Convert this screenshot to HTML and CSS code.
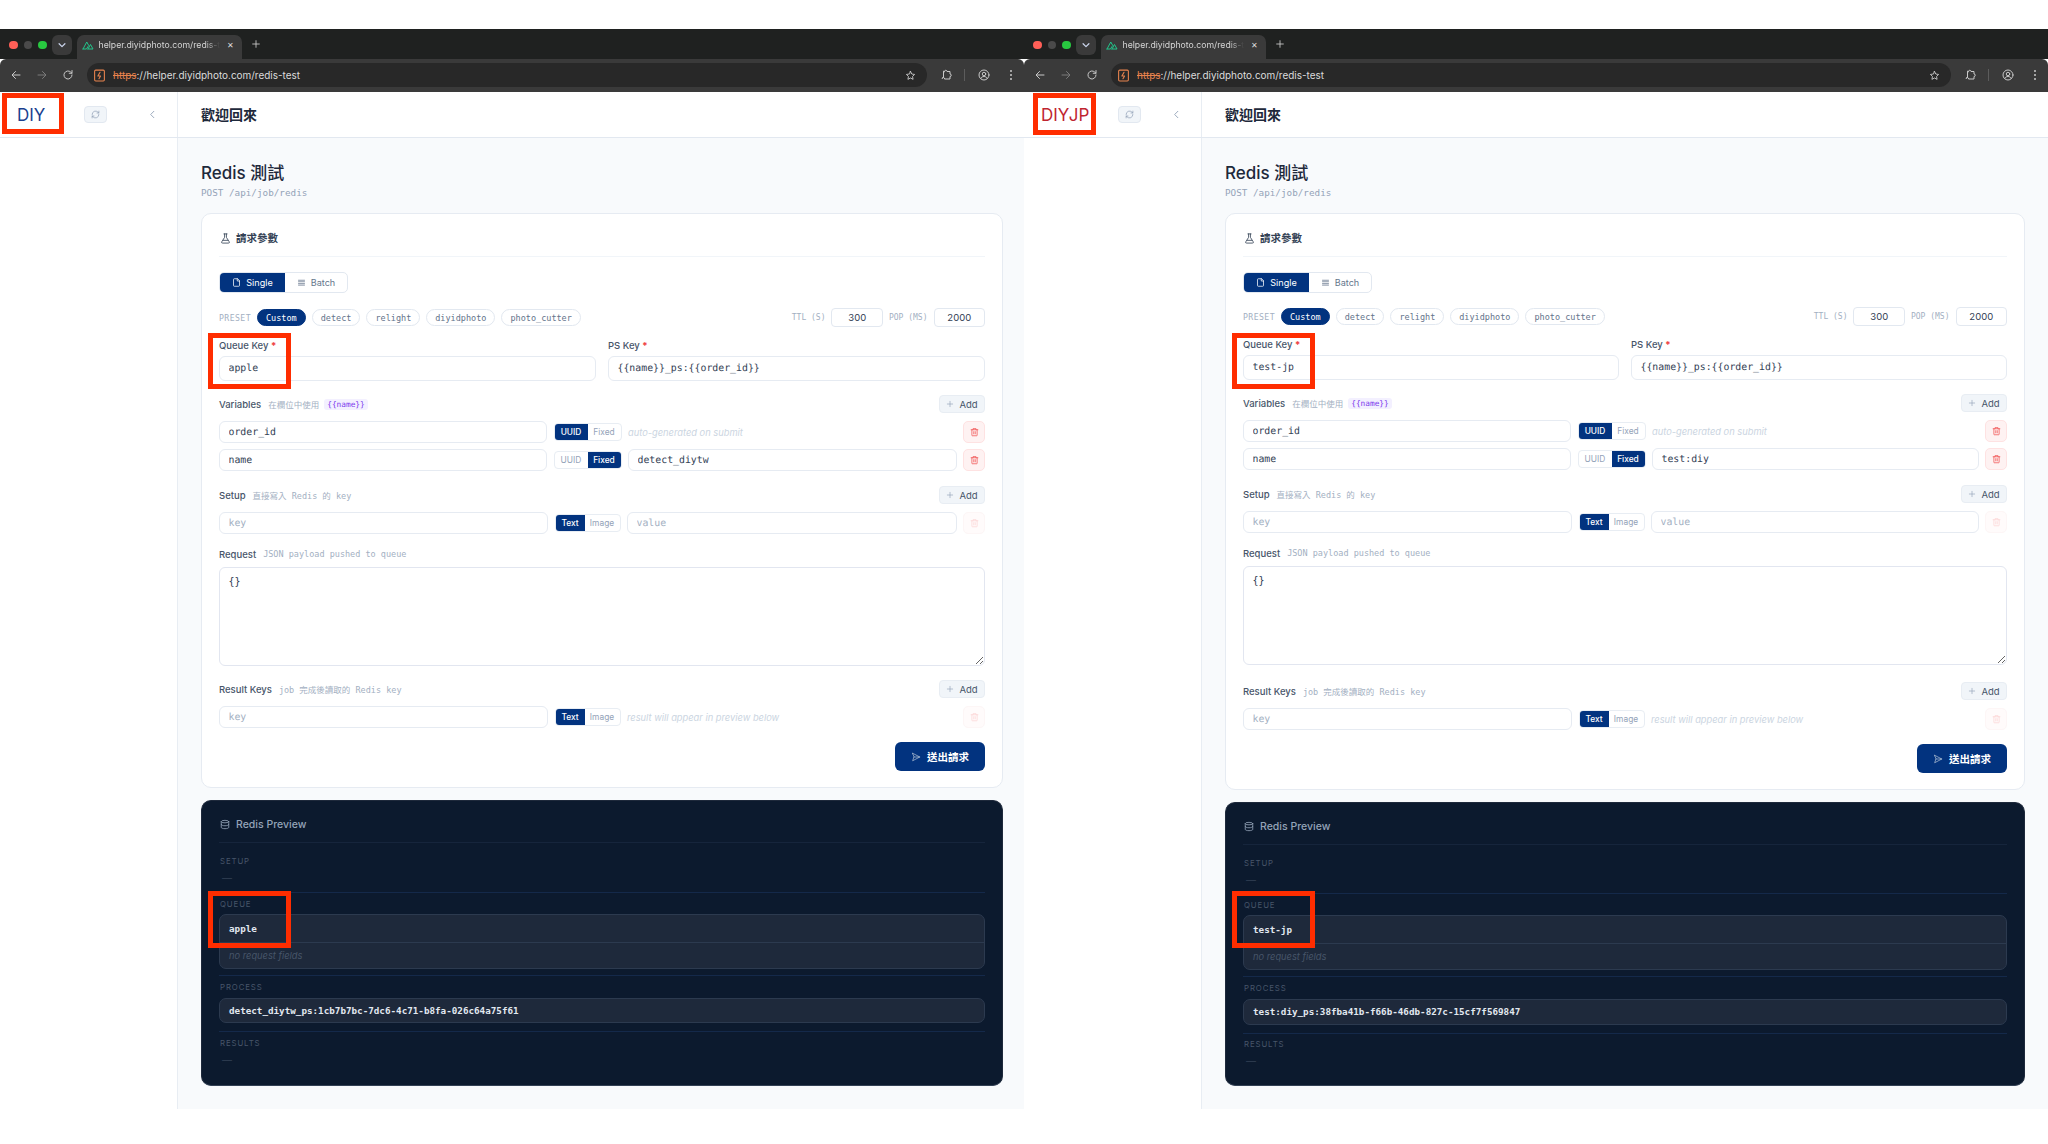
FILE: index.html
```html
<!DOCTYPE html>
<html lang="zh-Hant">
<head>
  <meta charset="UTF-8">
  <title>Redis 測試</title>
  <link rel="stylesheet" href="styles.css">
</head>
<body>
  <svg class="sprite" xmlns="http://www.w3.org/2000/svg">
    <symbol id="i-back" viewBox="0 0 24 24"><path d="M20 12H5M11 5l-7 7 7 7"/></symbol>
    <symbol id="i-forward" viewBox="0 0 24 24"><path d="M4 12h15M13 5l7 7-7 7"/></symbol>
    <symbol id="i-reload" viewBox="0 0 24 24"><path d="M20 12a8 8 0 1 1-2.500-5.800L20 8.500M20 3v5.500h-5.500"/></symbol>
    <symbol id="i-star" viewBox="0 0 24 24"><path d="M12 3l2.800 5.800 6.200.9-4.500 4.400 1.100 6.300L12 17.400l-5.600 3 1.100-6.300L3 9.700l6.200-.9z"/></symbol>
    <symbol id="i-puzzle" viewBox="0 0 24 24"><path d="M9 5a2.500 2.500 0 0 1 5 0h6v5a2.500 2.500 0 0 1 0 5v5H9a2.500 2.500 0 0 0-5-1l3-2V5z"/></symbol>
    <symbol id="i-profile" viewBox="0 0 24 24"><circle cx="12" cy="12" r="10"/><circle cx="12" cy="10" r="3.500"/><path d="M5.500 19c1.500-3 3.800-4 6.500-4s5 1 6.500 4"/></symbol>
    <symbol id="i-nuxt" viewBox="0 0 24 24"><path d="M2 20L9.500 6l4 7M13 20h9l-5-9-5 9zM2 20h7l3-5"/></symbol>
    <symbol id="i-site" viewBox="0 0 24 24"><rect x="3" y="2" width="18" height="20" rx="2"/><path d="M13 6l-4 7h5l-3 5"/></symbol>
    <symbol id="i-refresh" viewBox="0 0 24 24"><path d="M3 12a9 9 0 0 1 15.500-6.300L21 8M21 3v5h-5M21 12a9 9 0 0 1-15.500 6.300L3 16M3 21v-5h5"/></symbol>
    <symbol id="i-left" viewBox="0 0 24 24"><path d="M15 5l-7 7 7 7"/></symbol>
    <symbol id="i-flask" viewBox="0 0 24 24"><path d="M10 2v7.500L4 19a2 2 0 0 0 1.700 3h12.600a2 2 0 0 0 1.700-3L14 9.500V2M8.500 2h7M7 16h10"/></symbol>
    <symbol id="i-file" viewBox="0 0 24 24"><path d="M14 2H6a2 2 0 0 0-2 2v16a2 2 0 0 0 2 2h12a2 2 0 0 0 2-2V8zM14 2v6h6"/></symbol>
    <symbol id="i-rows" viewBox="0 0 24 24"><path d="M4 6h16M4 10h16M4 15h16M4 19h16"/></symbol>
    <symbol id="i-plus" viewBox="0 0 24 24"><path d="M12 4v16M4 12h16"/></symbol>
    <symbol id="i-trash" viewBox="0 0 24 24"><path d="M3 6h18M8 6V3h8v3M19 6v15a1 1 0 0 1-1 1H6a1 1 0 0 1-1-1V6M10 11v6M14 11v6"/></symbol>
    <symbol id="i-send" viewBox="0 0 24 24"><path d="M4 3l17 9-17 9 3-9zM7 12h14"/></symbol>
    <symbol id="i-db" viewBox="0 0 24 24"><ellipse cx="12" cy="5" rx="9" ry="3"/><path d="M3 5v14c0 1.700 4 3 9 3s9-1.300 9-3V5M3 12c0 1.700 4 3 9 3s9-1.300 9-3"/></symbol>
  </svg>

  <div class="page">

    <!-- 左邊視窗 DIY -->
    <section class="window">
      <div class="tabstrip">
        <span class="light red"></span><span class="light gray"></span><span class="light green"></span>
        <span class="tab-menu"><svg class="icon"><use href="#i-left"/></svg></span>
        <div class="tab">
          <svg class="icon favicon"><use href="#i-nuxt"/></svg>
          <span class="tab-title">helper.diyidphoto.com/redis-t</span>
          <span class="tab-close">✕</span>
        </div>
        <svg class="icon tab-new"><use href="#i-plus"/></svg>
      </div>
      <div class="toolbar">
        <svg class="icon tool"><use href="#i-back"/></svg>
        <svg class="icon tool dim"><use href="#i-forward"/></svg>
        <svg class="icon tool"><use href="#i-reload"/></svg>
        <div class="omnibox">
          <svg class="icon site"><use href="#i-site"/></svg>
          <span class="url"><s>https</s>://helper.diyidphoto.com/redis-test</span>
          <svg class="icon tool star"><use href="#i-star"/></svg>
        </div>
        <svg class="icon tool puzzle"><use href="#i-puzzle"/></svg>
        <span class="tool-sep"></span>
        <svg class="icon tool"><use href="#i-profile"/></svg>
        <span class="kebab"><i></i><i></i><i></i></span>
      </div>

      <header class="app-head">
        <div class="brand">
          <span class="logo">DIY</span>
          <span class="refresh"><svg class="icon"><use href="#i-refresh"/></svg></span>
          <svg class="icon collapse"><use href="#i-left"/></svg>
        </div>
        <h1 class="welcome">歡迎回來</h1>
      </header>

      <div class="app-body">
        <aside class="sidebar"></aside>
        <main class="main">
          <h2 class="page-title">Redis 測試</h2>
          <p class="page-sub">POST /api/job/redis</p>

          <div class="card">
            <div class="card-head"><svg class="icon"><use href="#i-flask"/></svg>請求參數</div>

            <div class="seg">
              <button class="seg-btn on"><svg class="icon"><use href="#i-file"/></svg>Single</button>
              <button class="seg-btn"><svg class="icon"><use href="#i-rows"/></svg>Batch</button>
            </div>

            <div class="preset-row">
              <span class="preset-label">PRESET</span>
              <button class="chip on">Custom</button>
              <button class="chip">detect</button>
              <button class="chip">relight</button>
              <button class="chip">diyidphoto</button>
              <button class="chip">photo_cutter</button>
              <span class="num-label ttl">TTL (S)</span>
              <input class="num" value="300">
              <span class="num-label">POP (MS)</span>
              <input class="num" value="2000">
            </div>

            <div class="keys">
              <div>
                <div class="field-label">Queue Key <b>*</b></div>
                <input class="input" value="apple">
              </div>
              <div>
                <div class="field-label">PS Key <b>*</b></div>
                <input class="input" value="{{name}}_ps:{{order_id}}">
              </div>
            </div>

            <div class="sec-head">
              <span class="sec-title">Variables</span><span class="hint cjk">在欄位中使用</span><span class="tag">{{name}}</span>
              <button class="add"><svg class="icon"><use href="#i-plus"/></svg>Add</button>
            </div>
            <div class="row">
              <input class="input short" value="order_id">
              <div class="toggle"><span class="on">UUID</span><span>Fixed</span></div>
              <span class="note">auto-generated on submit</span>
              <button class="del"><svg class="icon"><use href="#i-trash"/></svg></button>
            </div>
            <div class="row next">
              <input class="input short" value="name">
              <div class="toggle"><span>UUID</span><span class="on">Fixed</span></div>
              <input class="input short" value="detect_diytw">
              <button class="del"><svg class="icon"><use href="#i-trash"/></svg></button>
            </div>

            <div class="sec-head">
              <span class="sec-title">Setup</span><span class="hint">直接寫入 Redis 的 key</span>
              <button class="add"><svg class="icon"><use href="#i-plus"/></svg>Add</button>
            </div>
            <div class="row text-row">
              <input class="input short" placeholder="key">
              <div class="toggle"><span class="on">Text</span><span>Image</span></div>
              <input class="input short" placeholder="value">
              <button class="del off"><svg class="icon"><use href="#i-trash"/></svg></button>
            </div>

            <div class="req-label"><span class="sec-title">Request</span><span class="hint">JSON payload pushed to queue</span></div>
            <textarea class="area">{}</textarea>

            <div class="sec-head result-head">
              <span class="sec-title">Result Keys</span><span class="hint">job 完成後讀取的 Redis key</span>
              <button class="add"><svg class="icon"><use href="#i-plus"/></svg>Add</button>
            </div>
            <div class="row text-row">
              <input class="input short" placeholder="key">
              <div class="toggle"><span class="on">Text</span><span>Image</span></div>
              <span class="note">result will appear in preview below</span>
              <button class="del off"><svg class="icon"><use href="#i-trash"/></svg></button>
            </div>

            <div class="actions">
              <button class="submit"><svg class="icon"><use href="#i-send"/></svg>送出請求</button>
            </div>
          </div>

          <div class="preview">
            <div class="preview-head"><svg class="icon"><use href="#i-db"/></svg>Redis Preview</div>
            <div class="pv-sec setup">
              <div class="pv-label">SETUP</div>
              <div class="pv-dash">—</div>
            </div>
            <div class="pv-sec queue">
              <div class="pv-label">QUEUE</div>
              <div class="pv-box">
                <div class="pv-key">apple</div>
                <div class="pv-empty">no request fields</div>
              </div>
            </div>
            <div class="pv-sec process">
              <div class="pv-label">PROCESS</div>
              <div class="pv-box"><div class="pv-key solo">detect_diytw_ps:1cb7b7bc-7dc6-4c71-b8fa-026c64a75f61</div></div>
            </div>
            <div class="pv-sec results">
              <div class="pv-label">RESULTS</div>
              <div class="pv-dash">—</div>
            </div>
          </div>
        </main>
      </div>

      <span class="mark mark-logo"></span>
      <span class="mark mark-key"></span>
      <span class="mark mark-queue"></span>
    </section>

    <!-- 右邊視窗 DIYJP -->
    <section class="window jp">
      <div class="tabstrip">
        <span class="light red"></span><span class="light gray"></span><span class="light green"></span>
        <span class="tab-menu"><svg class="icon"><use href="#i-left"/></svg></span>
        <div class="tab">
          <svg class="icon favicon"><use href="#i-nuxt"/></svg>
          <span class="tab-title">helper.diyidphoto.com/redis-t</span>
          <span class="tab-close">✕</span>
        </div>
        <svg class="icon tab-new"><use href="#i-plus"/></svg>
      </div>
      <div class="toolbar">
        <svg class="icon tool"><use href="#i-back"/></svg>
        <svg class="icon tool dim"><use href="#i-forward"/></svg>
        <svg class="icon tool"><use href="#i-reload"/></svg>
        <div class="omnibox">
          <svg class="icon site"><use href="#i-site"/></svg>
          <span class="url"><s>https</s>://helper.diyidphoto.com/redis-test</span>
          <svg class="icon tool star"><use href="#i-star"/></svg>
        </div>
        <svg class="icon tool puzzle"><use href="#i-puzzle"/></svg>
        <span class="tool-sep"></span>
        <svg class="icon tool"><use href="#i-profile"/></svg>
        <span class="kebab"><i></i><i></i><i></i></span>
      </div>

      <header class="app-head">
        <div class="brand">
          <span class="logo">DIYJP</span>
          <span class="refresh"><svg class="icon"><use href="#i-refresh"/></svg></span>
          <svg class="icon collapse"><use href="#i-left"/></svg>
        </div>
        <h1 class="welcome">歡迎回來</h1>
      </header>

      <div class="app-body">
        <aside class="sidebar"></aside>
        <main class="main">
          <h2 class="page-title">Redis 測試</h2>
          <p class="page-sub">POST /api/job/redis</p>

          <div class="card">
            <div class="card-head"><svg class="icon"><use href="#i-flask"/></svg>請求參數</div>

            <div class="seg">
              <button class="seg-btn on"><svg class="icon"><use href="#i-file"/></svg>Single</button>
              <button class="seg-btn"><svg class="icon"><use href="#i-rows"/></svg>Batch</button>
            </div>

            <div class="preset-row">
              <span class="preset-label">PRESET</span>
              <button class="chip on">Custom</button>
              <button class="chip">detect</button>
              <button class="chip">relight</button>
              <button class="chip">diyidphoto</button>
              <button class="chip">photo_cutter</button>
              <span class="num-label ttl">TTL (S)</span>
              <input class="num" value="300">
              <span class="num-label">POP (MS)</span>
              <input class="num" value="2000">
            </div>

            <div class="keys">
              <div>
                <div class="field-label">Queue Key <b>*</b></div>
                <input class="input" value="test-jp">
              </div>
              <div>
                <div class="field-label">PS Key <b>*</b></div>
                <input class="input" value="{{name}}_ps:{{order_id}}">
              </div>
            </div>

            <div class="sec-head">
              <span class="sec-title">Variables</span><span class="hint cjk">在欄位中使用</span><span class="tag">{{name}}</span>
              <button class="add"><svg class="icon"><use href="#i-plus"/></svg>Add</button>
            </div>
            <div class="row">
              <input class="input short" value="order_id">
              <div class="toggle"><span class="on">UUID</span><span>Fixed</span></div>
              <span class="note">auto-generated on submit</span>
              <button class="del"><svg class="icon"><use href="#i-trash"/></svg></button>
            </div>
            <div class="row next">
              <input class="input short" value="name">
              <div class="toggle"><span>UUID</span><span class="on">Fixed</span></div>
              <input class="input short" value="test:diy">
              <button class="del"><svg class="icon"><use href="#i-trash"/></svg></button>
            </div>

            <div class="sec-head">
              <span class="sec-title">Setup</span><span class="hint">直接寫入 Redis 的 key</span>
              <button class="add"><svg class="icon"><use href="#i-plus"/></svg>Add</button>
            </div>
            <div class="row text-row">
              <input class="input short" placeholder="key">
              <div class="toggle"><span class="on">Text</span><span>Image</span></div>
              <input class="input short" placeholder="value">
              <button class="del off"><svg class="icon"><use href="#i-trash"/></svg></button>
            </div>

            <div class="req-label"><span class="sec-title">Request</span><span class="hint">JSON payload pushed to queue</span></div>
            <textarea class="area">{}</textarea>

            <div class="sec-head result-head">
              <span class="sec-title">Result Keys</span><span class="hint">job 完成後讀取的 Redis key</span>
              <button class="add"><svg class="icon"><use href="#i-plus"/></svg>Add</button>
            </div>
            <div class="row text-row">
              <input class="input short" placeholder="key">
              <div class="toggle"><span class="on">Text</span><span>Image</span></div>
              <span class="note">result will appear in preview below</span>
              <button class="del off"><svg class="icon"><use href="#i-trash"/></svg></button>
            </div>

            <div class="actions">
              <button class="submit"><svg class="icon"><use href="#i-send"/></svg>送出請求</button>
            </div>
          </div>

          <div class="preview">
            <div class="preview-head"><svg class="icon"><use href="#i-db"/></svg>Redis Preview</div>
            <div class="pv-sec setup">
              <div class="pv-label">SETUP</div>
              <div class="pv-dash">—</div>
            </div>
            <div class="pv-sec queue">
              <div class="pv-label">QUEUE</div>
              <div class="pv-box">
                <div class="pv-key">test-jp</div>
                <div class="pv-empty">no request fields</div>
              </div>
            </div>
            <div class="pv-sec process">
              <div class="pv-label">PROCESS</div>
              <div class="pv-box"><div class="pv-key solo">test:diy_ps:38fba41b-f66b-46db-827c-15cf7f569847</div></div>
            </div>
            <div class="pv-sec results">
              <div class="pv-label">RESULTS</div>
              <div class="pv-dash">—</div>
            </div>
          </div>
        </main>
      </div>

      <span class="mark mark-logo"></span>
      <span class="mark mark-key"></span>
      <span class="mark mark-queue"></span>
    </section>

  </div>
</body>
</html>
```

FILE: styles.css
```css
* {
  margin: 0;
  padding: 0;
  box-sizing: border-box;
}
body {
  width: 2048px;
  height: 1144px;
  overflow: hidden;
  background: #fff;
  color: #1e293b;
  font-family: Inter, "Noto Sans CJK TC", sans-serif;
}
input, button, textarea {
  font: inherit;
  color: inherit;
  outline: none;
}
.sprite {
  display: none;
}
.icon {
  display: block;
  flex: none;
  fill: none;
  stroke: currentColor;
  stroke-width: 2;
  stroke-linecap: round;
  stroke-linejoin: round;
}

.page {
  display: flex;
  padding-top: 29px;
}
.window {
  position: relative;
  width: 1024px;
}

/* 瀏覽器外框 */
.tabstrip {
  display: flex;
  align-items: flex-start;
  height: 30px;
  padding: 6px 0 0 9px;
  background: #1f2120;
}
.light {
  width: 8.500px;
  height: 8.500px;
  margin: 5.500px 6px 0 0;
  border-radius: 50%;
}
.light.red { background: #ff5f57; }
.light.gray { background: #4a4a4a; }
.light.green { background: #28c840; }
.tab-menu {
  display: flex;
  align-items: center;
  justify-content: center;
  width: 20px;
  height: 20px;
  margin-left: -1px;
  border-radius: 6px;
  background: #3a3a3a;
  color: #c9d3ea;
}
.tab-menu .icon {
  width: 10px;
  height: 10px;
  transform: rotate(-90deg);
  stroke-width: 3;
}
.tab {
  display: flex;
  align-items: center;
  width: 165px;
  height: 24px;
  margin-left: 5px;
  padding: 0 6px 4px 5px;
  border-radius: 7px 7px 0 0;
  background: #3a3a3a;
  color: #d6d6d6;
  font-size: 8.700px;
}
.favicon {
  width: 12px;
  height: 12px;
  color: #22c58b;
}
.tab-title {
  margin-left: 5px;
  white-space: nowrap;
  -webkit-mask-image: linear-gradient(90deg, #000 88%, transparent);
  mask-image: linear-gradient(90deg, #000 88%, transparent);
}
.tab-close {
  margin-left: auto;
  margin-right: 2px;
  font-size: 8px;
  color: #dcdcdc;
}
.tab-new {
  width: 10px;
  height: 10px;
  margin: 4px 0 0 9px;
  color: #d0d0d0;
}
.toolbar {
  display: flex;
  align-items: center;
  height: 33px;
  padding: 0 12px 1px 10px;
  border-radius: 6px 6px 0 0;
  background: #3a3a3a;
}
.tool {
  width: 12px;
  height: 12px;
  margin-right: 14px;
  color: #c8c8c8;
}
.tool.dim {
  color: #7b7b7b;
}
.omnibox {
  display: flex;
  align-items: center;
  flex: 1;
  height: 24px;
  margin-left: -1px;
  margin-right: 13px;
  padding-left: 6px;
  border-radius: 12px;
  background: #282828;
}
.site {
  width: 13px;
  height: 13px;
  color: #e8834e;
}
.url {
  margin-left: 7px;
  font-size: 9.950px;
  color: #dcdcdc;
}
.url s {
  color: #e8834e;
}
.star {
  margin-left: auto;
  margin-right: 11px;
  width: 11px;
  height: 11px;
}
.puzzle {
  margin-right: 12px;
}
.tool-sep {
  width: 1px;
  height: 12px;
  margin-right: 13px;
  background: #5c5c5c;
}
.kebab {
  display: flex;
  flex-direction: column;
  gap: 2px;
  margin-left: 6px;
}
.kebab i {
  width: 2px;
  height: 2px;
  border-radius: 50%;
  background: #c8c8c8;
}

/* 應用程式頂部 */
.app-head {
  display: flex;
  align-items: center;
  height: 46px;
  border-bottom: 1px solid #e2e8f0;
  background: #fff;
}
.brand {
  display: flex;
  align-items: center;
  width: 178px;
  height: 100%;
  padding: 0 19px 0 17px;
  border-right: 1px solid #e8edf3;
}
.logo {
  width: 67px;
  font-size: 17px;
  color: #1a3f8f;
}
.jp .logo {
  width: 76.500px;
  color: #bf2530;
}
.refresh {
  display: flex;
  align-items: center;
  justify-content: center;
  width: 23px;
  height: 17px;
  border: 1px solid #e2e8f0;
  border-radius: 4px;
  background: #f1f5f9;
  color: #94a3b8;
}
.refresh .icon {
  width: 9px;
  height: 9px;
}
.collapse {
  width: 11px;
  height: 11px;
  margin-left: auto;
  color: #94a3b8;
}
.welcome {
  margin-bottom: 2px;
  padding-left: 23px;
  font-size: 14px;
  font-weight: 600;
  color: #1e293b;
}

/* 內容 */
.app-body {
  display: flex;
}
.sidebar {
  width: 178px;
  border-right: 1px solid #e8edf3;
  background: #fff;
}
.main {
  flex: 1;
  padding: 23px 21px 23px 23px;
  background: #f8fafc;
}
.jp .main {
  padding-right: 23px;
}
.page-title {
  font-size: 17px;
  line-height: 24px;
  font-weight: 500;
  color: #1e293b;
}
.page-sub {
  margin-top: 1px;
  font-family: "DejaVu Sans Mono", monospace;
  font-size: 9.300px;
  line-height: 14px;
  color: #94a3b8;
}
.card {
  margin-top: 13px;
  padding: 17px 17px 16px;
  border: 1px solid #e6ebf2;
  border-radius: 10px;
  background: #fff;
}
.card-head {
  display: flex;
  align-items: center;
  gap: 5px;
  height: 26px;
  padding: 0 0 10px 1px;
  border-bottom: 1px solid #f1f5f9;
  font-size: 10.500px;
  font-weight: 600;
  line-height: 16px;
  color: #334155;
}
.card-head .icon {
  width: 11px;
  height: 11px;
  stroke-width: 1.800;
}
.seg {
  display: flex;
  width: 129px;
  height: 21px;
  margin-top: 15px;
  border: 1px solid #e2e8f0;
  border-radius: 5px;
  overflow: hidden;
  background: #fff;
}
.seg-btn {
  display: flex;
  align-items: center;
  justify-content: center;
  gap: 5px;
  flex: 1;
  border: 0;
  background: none;
  font-size: 9.100px;
  color: #64748b;
}
.seg-btn.on {
  flex: none;
  width: 65px;
  background: #02337f;
  color: #fff;
}
.seg-btn .icon {
  width: 9px;
  height: 9px;
}
.preset-row {
  display: flex;
  align-items: center;
  gap: 6px;
  height: 19px;
  margin-top: 15px;
}
.preset-label {
  font-family: "DejaVu Sans Mono", monospace;
  font-size: 8.200px;
  letter-spacing: .4px;
  color: #a3b0c2;
}
.num-label {
  font-family: "DejaVu Sans Mono", monospace;
  font-size: 8px;
  color: #a3b0c2;
}
.chip {
  height: 17px;
  padding: 0 8px;
  border: 1px solid #e2e8f0;
  border-radius: 9px;
  background: #fff;
  font-family: "DejaVu Sans Mono", monospace;
  font-size: 8.500px;
  color: #64748b;
}
.chip.on {
  border-color: #02337f;
  background: #02337f;
  color: #fff;
}
.ttl {
  margin-left: auto;
}
.num {
  width: 51.500px;
  height: 19px;
  border: 1px solid #e2e8f0;
  border-radius: 4px;
  background: #fff;
  text-align: center;
  font-size: 9.500px;
  line-height: 14px;
  color: #334155;
}
.keys {
  display: grid;
  grid-template-columns: 1fr 1fr;
  gap: 12px;
  margin-top: 13px;
}
.field-label {
  margin-bottom: 4px;
  font-size: 9.500px;
  font-weight: 500;
  line-height: 12px;
  color: #475569;
}
.field-label b {
  color: #ef4444;
}
.input {
  display: block;
  width: 100%;
  height: 25px;
  padding: 0 8.500px;
  border: 1px solid #e6ebf2;
  border-radius: 6px;
  background: #fff;
  font-family: "DejaVu Sans Mono", monospace;
  font-size: 9.850px;
  line-height: 18px;
  text-rendering: geometricPrecision;
  color: #334155;
}
.input.short {
  height: 22px;
}
.input::placeholder {
  color: #a3b0c2;
}
.sec-head {
  display: flex;
  align-items: center;
  height: 18px;
  margin-top: 14px;
}
.row + .sec-head {
  margin-top: 15px;
}
.sec-title {
  font-size: 9.500px;
  font-weight: 500;
  color: #475569;
}
.hint {
  margin-left: 7px;
  font-family: "DejaVu Sans Mono", "Noto Sans CJK TC", monospace;
  font-size: 8.500px;
  color: #a3b0c2;
}
.hint.cjk {
  font-family: Inter, "Noto Sans CJK TC", sans-serif;
}
.tag {
  margin-left: 5px;
  padding: 1px 3px;
  border-radius: 3px;
  background: #f3f0ff;
  font-family: "DejaVu Sans Mono", monospace;
  font-size: 7.800px;
  color: #7c3aed;
}
.add {
  display: flex;
  align-items: center;
  justify-content: center;
  gap: 5px;
  width: 46px;
  height: 18px;
  margin-left: auto;
  border: 1px solid #e8edf3;
  border-radius: 4px;
  background: #f1f5f9;
  font-size: 9.500px;
  color: #475569;
}
.add .icon {
  width: 8px;
  height: 8px;
  color: #94a3b8;
}
.row {
  display: grid;
  grid-template-columns: 328px 68px 1fr 22px;
  align-items: center;
  column-gap: 6.500px;
  height: 22px;
  margin-top: 8px;
}
.row.next {
  margin-top: 6px;
}
.row.text-row {
  grid-template-columns: 329px 66px 1fr 22px;
}
.toggle {
  display: flex;
  height: 18px;
  border: 1px solid #e8edf3;
  border-radius: 4px;
  overflow: hidden;
  background: #fff;
  font-size: 8.400px;
  color: #94a3b8;
}
.toggle span {
  display: flex;
  align-items: center;
  justify-content: center;
  flex: 1;
}
.toggle .on {
  background: #02337f;
  color: #fff;
  font-weight: 500;
}
.text-row .toggle .on {
  flex: none;
  width: 29px;
}
.note {
  font-size: 9.300px;
  font-style: italic;
  color: #cbd5e1;
}
.del {
  display: flex;
  align-items: center;
  justify-content: center;
  height: 22px;
  border: 1px solid #fee2e2;
  border-radius: 5px;
  background: #fef2f2;
  color: #f05252;
}
.del .icon {
  width: 9px;
  height: 10px;
}
.del.off {
  border-color: #fdf6f6;
  background: #fffbfb;
  color: #fcd5d5;
}
.req-label {
  display: flex;
  align-items: center;
  height: 12px;
  margin-top: 14px;
}
.area {
  display: block;
  width: 100%;
  height: 99px;
  margin-top: 7px;
  padding: 7px 8.500px;
  border: 1px solid #e2e6f0;
  border-radius: 6px;
  background: #fff;
  font-family: "DejaVu Sans Mono", monospace;
  font-size: 10px;
  line-height: 14px;
  color: #334155;
  resize: vertical;
}
.actions {
  display: flex;
  justify-content: flex-end;
  margin-top: 14px;
}
.submit {
  display: flex;
  align-items: center;
  justify-content: center;
  gap: 6px;
  width: 90px;
  height: 29px;
  border: 0;
  border-radius: 6px;
  background: #02337f;
  color: #fff;
  font-size: 10.500px;
  font-weight: 600;
}
.submit .icon {
  width: 10px;
  height: 10px;
  stroke-width: 1.500;
  color: #cbd5e1;
}

/* Redis 預覽 */
.preview {
  margin-top: 12px;
  padding: 16px 17px 19px;
  border: 1px solid #1e293b;
  border-bottom-color: #334155;
  border-radius: 10px;
  background: #0c1a2e;
}
.preview-head {
  display: flex;
  align-items: center;
  gap: 6px;
  height: 26px;
  padding: 0 0 10px 1px;
  border-bottom: 1px solid #16253c;
  font-size: 10.500px;
  font-weight: 500;
  color: #94a3b8;
}
.preview-head .icon {
  width: 10px;
  height: 11px;
  stroke-width: 2;
}
.pv-sec {
  padding: 6px 0 0;
  border-top: 1px solid #14294a;
}
.pv-sec.setup {
  padding: 13px 0 8px;
  border-top: 0;
}
.pv-sec.queue {
  padding-bottom: 6px;
}
.pv-sec.process {
  padding-bottom: 8px;
}
.pv-label {
  padding-left: 1px;
  font-size: 7.800px;
  line-height: 10px;
  letter-spacing: .9px;
  color: #475569;
}
.pv-dash {
  margin-top: 6px;
  padding-left: 3px;
  font-size: 10px;
  line-height: 12px;
  color: #334155;
}
.pv-box {
  margin-top: 5px;
  border: 1px solid #2c3a4f;
  border-radius: 7px;
  background: #1e293b;
}
.process .pv-box {
  margin-top: 6px;
}
.pv-key {
  height: 28px;
  padding-left: 9px;
  border-bottom: 1px solid #2c3a4f;
  font-family: "DejaVu Sans Mono", monospace;
  font-size: 9.250px;
  font-weight: 700;
  line-height: 28px;
  color: #e2e8f0;
}
.pv-key.solo {
  height: 23px;
  border-bottom: 0;
  line-height: 23px;
}
.pv-empty {
  height: 25px;
  padding-left: 9px;
  font-size: 9.300px;
  font-style: italic;
  line-height: 25px;
  color: #475569;
}

/* 右視窗的細微位移 */
.jp .preset-row {
  margin-top: 14px;
}
.jp .result-head {
  margin-top: 17px;
}
.jp .pv-sec.setup {
  padding-bottom: 7px;
}
.jp .pv-key.solo {
  height: 24px;
}
.jp .pv-sec.results {
  padding-top: 5px;
}
.jp .preview {
  padding-bottom: 18px;
}

/* 紅框標註 */
.mark {
  position: absolute;
  border: 5px solid #ff2d00;
}
.mark-logo {
  top: 64px;
  left: 2px;
  width: 62px;
  height: 41px;
}
.jp .mark-logo {
  left: 9px;
  width: 63px;
  height: 42px;
}
.mark-key {
  top: 304px;
  left: 208px;
  width: 83px;
  height: 56px;
}
.mark-queue {
  top: 862px;
  left: 208px;
  width: 83px;
  height: 57px;
}
```
